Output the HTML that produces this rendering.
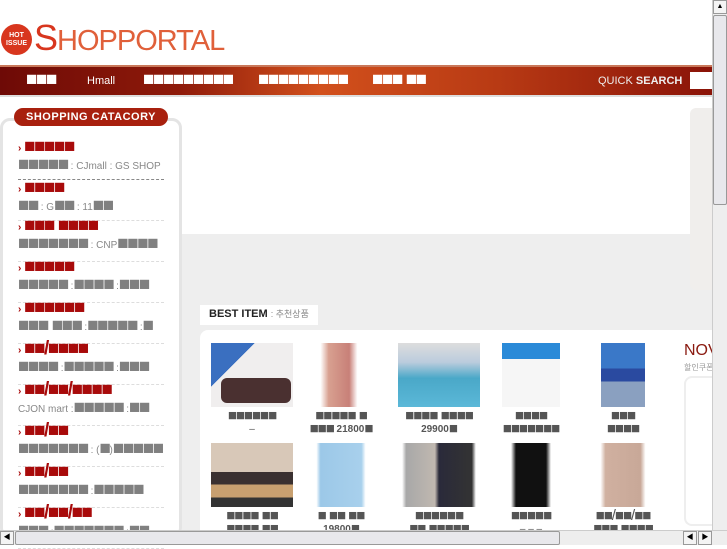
<!DOCTYPE html>
<html><head><meta charset="utf-8"><style>
*{margin:0;padding:0;box-sizing:border-box}
body{width:727px;height:545px;overflow:hidden;background:#fff;font-family:"Liberation Sans","Noto Sans CJK KR",sans-serif;position:relative}
.a{position:absolute}
.q{font-family:"Liberation Sans",sans-serif;font-size:19px;letter-spacing:-1.5px;line-height:10px;vertical-align:-1px}
.nav{left:0;top:65px;width:712px;height:32px;background:linear-gradient(90deg,#6e0a06 0%,#8e1a0a 25%,#d2501c 45%,#b83a14 70%,#8a1308 100%);border-top:2px solid #c9785a;border-bottom:2px solid #ddd}
.nav span{position:absolute;top:8px;color:#fff;font-size:11px;line-height:13px}
.nav span.q{font-size:19px;line-height:13px;top:6px}
.cat{left:18px;width:150px}
.blk{height:41px;border-bottom:1px dashed #ddd;width:146px}
.t{color:#a80a0a;font-size:10px;font-weight:bold;height:16px;line-height:14px;white-space:nowrap}
.g{color:#808080;font-size:10px;line-height:17px;height:18px;white-space:nowrap}
.s{color:#888;font-size:10px;letter-spacing:0}
.item{position:absolute;width:82px;text-align:center;color:#555;line-height:13px;font-size:10px;white-space:nowrap}
.item .q{font-size:15px;letter-spacing:-1px}
.img{width:82px;height:64px;margin:0 auto 3px}
</style></head><body>
<div class="a" style="left:1px;top:24px;width:31px;height:31px;border-radius:50%;background:#d8361e;color:#fff;font-size:7px;font-weight:bold;text-align:center;line-height:8px;padding-top:8px">HOT<br>ISSUE</div>
<div class="a" style="left:34px;top:16px;font-size:36px;color:#e0603a;letter-spacing:-1px;line-height:44px"><span style="color:#d8361e">S</span><span style="font-size:29px">HOPPORTAL</span></div>
<div class="a nav">
<span class="q" style="left:26px">■■■</span>
<span style="left:87px">Hmall</span>
<span class="q" style="left:143px">■■■■■■■■■</span>
<span class="q" style="left:258px">■■■■■■■■■</span>
<span class="q" style="left:372px">■■■ ■■</span>
<span style="left:598px;color:#eee">QUICK <b>SEARCH</b></span>
</div>
<div class="a" style="left:690px;top:72px;width:22px;height:17px;background:#fff"></div>
<div class="a" style="left:182px;top:234px;width:530px;height:296px;background:#eeeeee"></div>
<div class="a" style="left:690px;top:108px;width:22px;height:182px;background:#f0eeec;border-radius:6px 0 0 6px"></div>
<div class="a" style="left:0;top:118px;width:182px;height:420px;border:3px solid #e4e4e4;border-radius:10px;background:#fff"></div>
<div class="a" style="left:14px;top:108px;width:154px;height:18px;border-radius:9px;background:#a8200e;color:#fff;font-size:11px;font-weight:bold;text-align:center;line-height:18px;letter-spacing:.5px">SHOPPING CATACORY</div>
<div class="a cat" style="top:142px;">
<div class="blk" style="border-bottom:1px dashed #888;height:38px"><div class="t">› <span class="q">■■■■■</span></div><div class="g"><span class="q">■■■■■</span> <span class="s">: CJmall : GS SHOP</span></div></div>
<div class="blk" style="padding-top:3px"><div class="t">› <span class="q">■■■■</span></div><div class="g"><span class="q">■■</span> <span class="s">: G</span><span class="q">■■</span> <span class="s">: 11</span><span class="q">■■</span></div></div>
<div class="blk"><div class="t">› <span class="q">■■■ ■■■■</span></div><div class="g"><span class="q">■■■■■■■</span> <span class="s">: CNP</span><span class="q">■■■■</span></div></div>
<div class="blk"><div class="t">› <span class="q">■■■■■</span></div><div class="g"><span class="q">■■■■■</span> <span class="s">:</span><span class="q">■■■■</span> <span class="s">:</span><span class="q">■■■</span></div></div>
<div class="blk"><div class="t">› <span class="q">■■■■■■</span></div><div class="g"><span class="q">■■■ ■■■</span> <span class="s">:</span><span class="q">■■■■■</span> <span class="s">:</span><span class="q">■</span></div></div>
<div class="blk"><div class="t">› <span class="q">■■/■■■■</span></div><div class="g"><span class="q">■■■■</span> <span class="s">:</span><span class="q">■■■■■</span> <span class="s">:</span><span class="q">■■■</span></div></div>
<div class="blk"><div class="t">› <span class="q">■■/■■/■■■■</span></div><div class="g"><span class="s">CJON mart :</span><span class="q">■■■■■</span> <span class="s">:</span><span class="q">■■</span></div></div>
<div class="blk"><div class="t">› <span class="q">■■/■■</span></div><div class="g"><span class="q">■■■■■■■</span> <span class="s">: (</span><span class="q">■</span><span class="s">)</span><span class="q">■■■■■</span></div></div>
<div class="blk"><div class="t">› <span class="q">■■/■■</span></div><div class="g"><span class="q">■■■■■■■</span> <span class="s">:</span><span class="q">■■■■■</span></div></div>
<div class="blk"><div class="t">› <span class="q">■■/■■/■■</span></div><div class="g"><span class="q">■■■</span> <span class="s">:</span><span class="q">■■■■■■■</span> <span class="s">:</span><span class="q">■■</span></div></div>
</div>
<div class="a" style="left:200px;top:305px;width:118px;height:20px;background:#fff;font-size:11px;line-height:18px;padding-left:9px"><b style="color:#222">BEST ITEM</b> <span style="color:#888;font-size:9px">: 추천상품</span></div>
<div class="a" style="left:200px;top:330px;width:512px;height:200px;background:#fff;border-radius:8px 0 0 0"></div>
<div class="a" style="left:684px;top:342px;font-size:16px;color:#8a1a10;line-height:18px">NOV</div>
<div class="a" style="left:684px;top:362px;font-size:8px;color:#999">할인쿠폰</div>
<div class="a" style="left:684px;top:376px;width:28px;height:150px;border:2px solid #eee;border-right:none;border-radius:8px 0 0 8px"></div>
<div class="item" style="left:211px;top:343px"><div class="img" style="background:linear-gradient(135deg,#3a6fc0 0 30%,#f0eeee 30%);position:relative"><div style="position:absolute;left:10px;bottom:4px;width:70px;height:25px;background:#4a3030;border-radius:6px"></div></div><span class="q">■■■■■■</span><br>–</div>
<div class="item" style="left:300px;top:343px"><div class="img" style="background:linear-gradient(90deg,#fff 25%,#d8a090 35%,#c88078 60%,#fff 70%)"></div><span class="q">■■■■■ ■</span><br><span class="q">■■■</span> <b>21800</b><span class="q">■</span></div>
<div class="item" style="left:398px;top:343px"><div class="img" style="background:linear-gradient(180deg,#ddd 0,#bcd 30%,#4aa8c8 55%,#5bb8d8 100%)"></div><span class="q">■■■■ ■■■■</span><br><b>29900</b><span class="q">■</span></div>
<div class="item" style="left:490px;top:343px"><div class="img" style="width:58px;background:linear-gradient(180deg,#2a8ad8 0 25%,#f6f6f6 25%)"></div><span class="q">■■■■</span><br><span class="q">■■■■■■■</span></div>
<div class="item" style="left:582px;top:343px"><div class="img" style="width:44px;background:linear-gradient(180deg,#3a78c8 0 40%,#2a4aa0 40% 60%,#8aa0c0 60%)"></div><span class="q">■■■</span><br><span class="q">■■■■</span></div>
<div class="item" style="left:211px;top:443px"><div class="img" style="background:linear-gradient(180deg,#d8c8b8 0 45%,#3a3030 45% 65%,#c8a070 65% 85%,#333 85%)"></div><span class="q">■■■■ ■■</span><br><span class="q">■■■■ ■■</span></div>
<div class="item" style="left:300px;top:443px"><div class="img" style="background:linear-gradient(90deg,#fff 20%,#9cc8e8 25%,#a8d0ec 75%,#fff 80%)"></div><span class="q">■ ■■ ■■</span><br><b>19800</b><span class="q">■</span></div>
<div class="item" style="left:398px;top:443px"><div class="img" style="background:linear-gradient(90deg,#fff 5%,#a8a8a8 10%,#c0b8b0 45%,#2a2a3a 50%,#333 90%,#fff 95%)"></div><span class="q">■■■■■■</span><br><span class="q">■■ ■■■■■</span></div>
<div class="item" style="left:490px;top:443px"><div class="img" style="width:50px;background:linear-gradient(90deg,#fff 10%,#111 20%,#111 80%,#fff 90%)"></div><span class="q">■■■■■</span><br>– – –</div>
<div class="item" style="left:582px;top:443px"><div class="img" style="width:50px;background:linear-gradient(90deg,#fff 5%,#d0b0a0 15%,#c8a898 85%,#fff 95%)"></div><span class="q">■■/■■/■■</span><br><span class="q">■■■ ■■■■</span></div>
<div class="a" style="left:712px;top:0;width:15px;height:530px;background:#eeeeee;border-left:1px solid #ccc"></div>
<div class="a" style="left:713px;top:0;width:14px;height:14px;background:#f4f4f4;border:1px solid #999;font-size:7px;text-align:center;line-height:12px">▲</div>
<div class="a" style="left:713px;top:15px;width:14px;height:190px;background:#e8e8ec;border:1px solid #999;border-radius:2px"></div>
<div class="a" style="left:0;top:530px;width:727px;height:15px;background:#eeeeee;border-top:1px solid #ccc"></div>
<div class="a" style="left:0;top:531px;width:14px;height:14px;background:#f4f4f4;border:1px solid #999;font-size:7px;text-align:center;line-height:12px">◀</div>
<div class="a" style="left:15px;top:531px;width:545px;height:14px;background:#e8e8ec;border:1px solid #999;border-radius:2px"></div>
<div class="a" style="left:683px;top:531px;width:14px;height:14px;background:#f4f4f4;border:1px solid #999;font-size:7px;text-align:center;line-height:12px">◀</div>
<div class="a" style="left:698px;top:531px;width:14px;height:14px;background:#f4f4f4;border:1px solid #999;font-size:7px;text-align:center;line-height:12px">▶</div>
</body></html>
